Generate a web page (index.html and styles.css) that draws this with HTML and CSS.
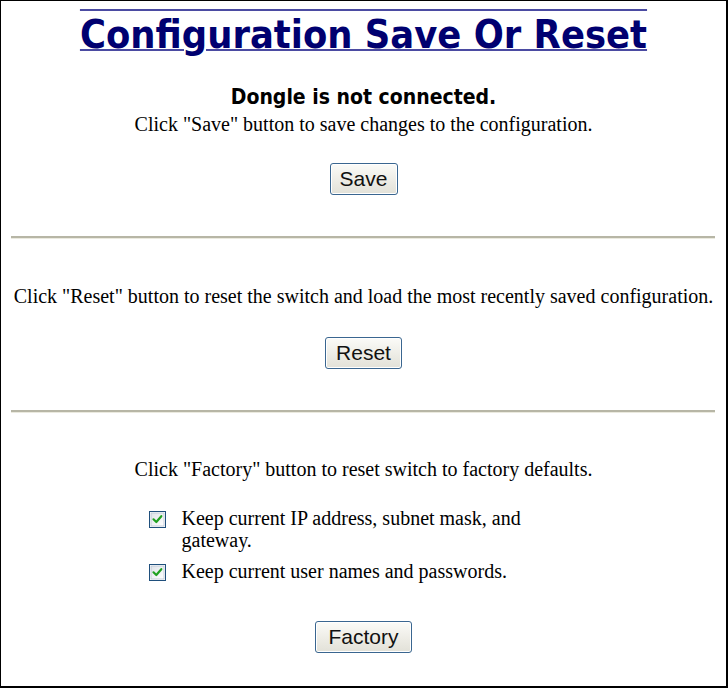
FILE: index.html
```html
<!DOCTYPE html>
<html>
<head>
<meta charset="utf-8">
<link rel="stylesheet" href="styles.css">
</head>
<body>
<div class="frame">
  <h1 class="title">Configuration Save Or Reset</h1>
  <div class="status">Dongle is not connected.</div>
  <p class="note note-save">Click "Save" button to save changes to the configuration.</p>
  <button class="btn btn-save">Save</button>
  <div class="rule rule-1"></div>
  <p class="note note-reset">Click "Reset" button to reset the switch and load the most recently saved configuration.</p>
  <button class="btn btn-reset">Reset</button>
  <div class="rule rule-2"></div>
  <p class="note note-factory">Click "Factory" button to reset switch to factory defaults.</p>
  <div class="options">
    <label class="opt">
      <svg class="cb" width="17" height="17" viewBox="0 0 17 17">
        <defs><linearGradient id="g1" x1="0" y1="0" x2="1" y2="1"><stop offset="0" stop-color="#dfe3e8"/><stop offset="1" stop-color="#ffffff"/></linearGradient></defs>
        <rect x="0.5" y="0.5" width="16" height="16" fill="#ffffff" stroke="#1f4f7c"/>
        <rect x="2" y="2" width="13" height="13" fill="url(#g1)" stroke="#b8c4d2" stroke-width="0.8"/>
        <path d="M4.5 8.3 L7.3 11 L12.3 5.2" fill="none" stroke="#21a121" stroke-width="2.2" stroke-linejoin="round" stroke-linecap="round"/>
      </svg>
      <span class="opt-text">Keep current IP address, subnet mask, and gateway.</span>
    </label>
    <label class="opt">
      <svg class="cb" width="17" height="17" viewBox="0 0 17 17">
        <defs><linearGradient id="g2" x1="0" y1="0" x2="1" y2="1"><stop offset="0" stop-color="#dfe3e8"/><stop offset="1" stop-color="#ffffff"/></linearGradient></defs>
        <rect x="0.5" y="0.5" width="16" height="16" fill="#ffffff" stroke="#1f4f7c"/>
        <rect x="2" y="2" width="13" height="13" fill="url(#g2)" stroke="#b8c4d2" stroke-width="0.8"/>
        <path d="M4.5 8.3 L7.3 11 L12.3 5.2" fill="none" stroke="#21a121" stroke-width="2.2" stroke-linejoin="round" stroke-linecap="round"/>
      </svg>
      <span class="opt-text">Keep current user names and passwords.</span>
    </label>
  </div>
  <button class="btn btn-factory">Factory</button>
</div>
</body>
</html>
```

FILE: styles.css
```css
html, body {
  margin: 0;
  padding: 0;
  background: #ffffff;
}
.frame {
  box-sizing: border-box;
  width: 728px;
  height: 688px;
  border-style: solid;
  border-color: #000000;
  border-width: 1px 2px 2px 1px;
  display: flex;
  flex-direction: column;
  align-items: center;
  font-family: "Liberation Serif", "Times New Roman", serif;
  color: #000000;
}
.title {
  margin: 10px 0 0 0;
  font-family: "DejaVu Sans Condensed", "DejaVu Sans", sans-serif;
  font-weight: bold;
  font-size: 39.4px;
  line-height: 46px;
  color: #000070;
  text-decoration: underline overline;
  text-decoration-color: #4b4ba2;
  text-decoration-thickness: 2px;
  text-underline-offset: 1px;
}
.status {
  margin-top: 28px;
  font-family: "DejaVu Sans Condensed", "DejaVu Sans", sans-serif;
  font-weight: bold;
  font-size: 21px;
  line-height: 24px;
}
.note {
  margin: 0;
  font-size: 20px;
  line-height: 23px;
}
.note-save { margin-top: 4px; }
.btn {
  font-family: "Liberation Sans", Arial, sans-serif;
  font-size: 21px;
  line-height: 24px;
  color: #111111;
  height: 32px;
  padding: 0;
  border: 1px solid #3a6690;
  border-radius: 3px;
  background: linear-gradient(#fbfbf8, #ecebe4 60%, #e2e1d8);
  box-shadow: inset 0 0 0 1px #ffffff;
}
.btn-save { margin-top: 27px; width: 68px; }
.btn-reset { margin-top: 29px; width: 77px; }
.btn-factory { margin-top: 39px; width: 97px; }
.rule {
  align-self: stretch;
  margin-left: 10px;
  margin-right: 11px;
  height: 0;
  border-top: 2px solid #b7b6a6;
  border-bottom: 1px solid #ebeadf;
}
.rule-1 { margin-top: 41px; }
.rule-2 { margin-top: 41px; }
.note-reset { margin-top: 46px; }
.note-factory { margin-top: 45px; }
.options {
  margin-top: 26px;
  width: 430px;
  display: flex;
  flex-direction: column;
  gap: 9px;
}
.opt {
  display: flex;
  align-items: flex-start;
  gap: 16px;
  font-size: 20px;
  line-height: 22px;
}
.cb {
  flex: none;
  margin-top: 4px;
}
.opt-text {
  width: 370px;
}
```
